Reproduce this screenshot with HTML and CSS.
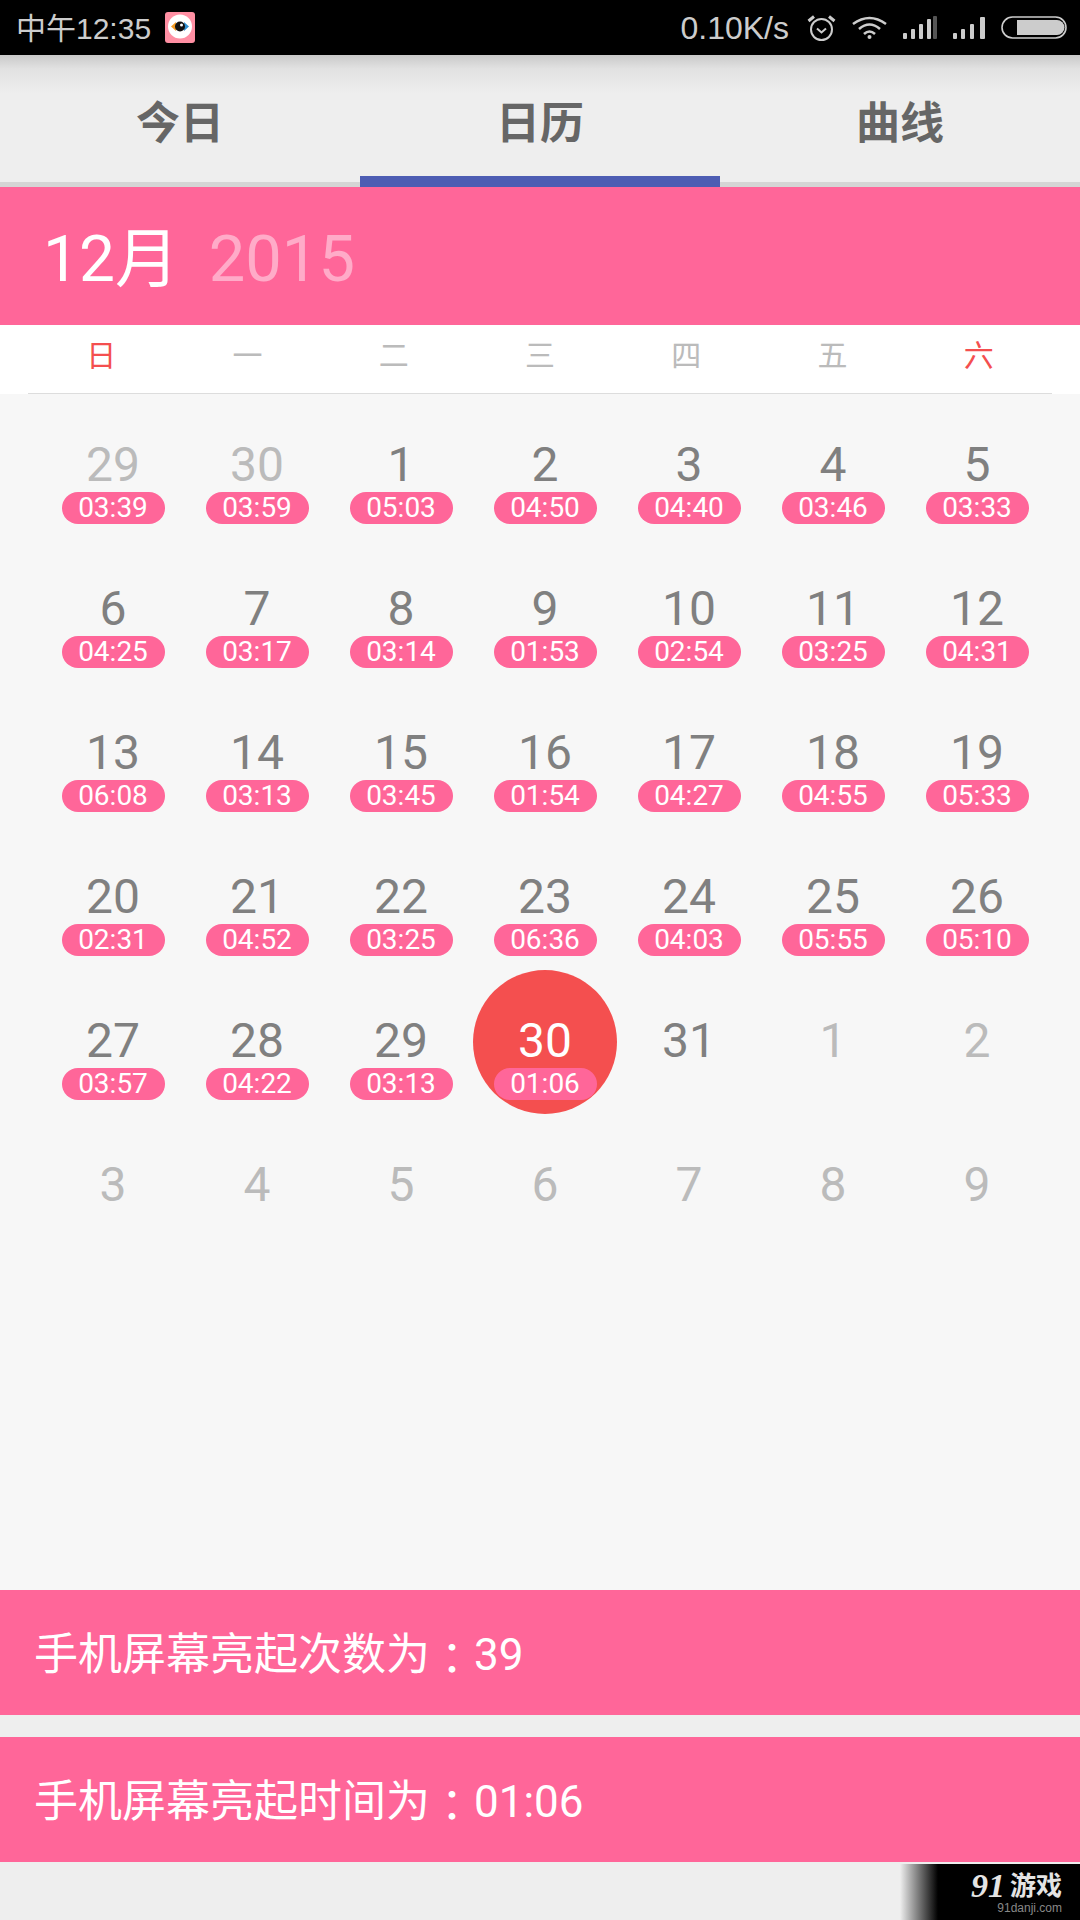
FILE: index.html
```html
<!DOCTYPE html>
<html lang="zh">
<head>
    <meta charset="UTF-8">
    <title>日历</title>
    <link rel="stylesheet" href="styles.css">
</head>
<body>
    <div class="app">
        <div class="status-bar">
            <div class="status-left">
                <span class="status-text clock">中午12:35</span>
                <svg class="app-icon" width="30" height="31" viewBox="0 0 30 31">
                    <rect width="30" height="31" rx="3" fill="#ff8fa3"/>
                    <circle cx="15" cy="14.5" r="12" fill="#fff"/>
                    <path d="M6 14.5 L11 10 V19 Z" fill="#f39a22"/>
                    <path d="M24 14.5 L19 10 V19 Z" fill="#2f8fd0"/>
                    <circle cx="15" cy="14.5" r="5" fill="#111"/>
                    <circle cx="16.5" cy="13" r="1.5" fill="#fff"/>
                </svg>
            </div>
            <div class="status-right">
                <span class="status-text speed">0.10K/s</span>
                <svg class="alarm" width="29" height="26" viewBox="0 0 29 26" fill="none" stroke="#ccc">
                    <circle cx="14.5" cy="14.5" r="10.5" stroke-width="2"/>
                    <path d="M10 13.5 L14.5 17.5 L19 13.5" stroke-width="2"/>
                    <path d="M1.5 6 L7 1.5 M27.5 6 L22 1.5" stroke-width="3"/>
                </svg>
                <svg class="wifi" width="35" height="23" viewBox="0 0 35 23" fill="none" stroke="#ccc" stroke-width="2.6">
                    <path d="M1 8 Q17.5 -4 34 8"/>
                    <path d="M7 13 Q17.5 4 28 13"/>
                    <path d="M12 18 Q17.5 13 23 18"/>
                    <circle cx="17.5" cy="21" r="2" fill="#ccc" stroke="none"/>
                </svg>
                <svg class="signal" width="34" height="23" viewBox="0 0 34 23" fill="#ccc">
                    <rect x="0" y="17" width="4" height="6" rx="1"/>
                    <rect x="8" y="13" width="4" height="10" rx="1"/>
                    <rect x="16" y="8" width="4" height="15" rx="1"/>
                    <rect x="24" y="3" width="4" height="20" rx="1"/>
                    <rect x="30" y="0" width="4" height="23" rx="1" fill="#555"/>
                </svg>
                <svg class="signal" width="34" height="23" viewBox="0 0 34 23" fill="#ccc">
                    <rect x="0" y="17" width="4" height="6" rx="1"/>
                    <rect x="8" y="13" width="4" height="10" rx="1"/>
                    <rect x="17" y="8" width="4" height="15" rx="1"/>
                    <rect x="27" y="1" width="5" height="22" rx="1"/>
                </svg>
                <svg class="battery" width="66" height="23" viewBox="0 0 66 23">
                    <rect x="1" y="1" width="64" height="21" rx="10.5" fill="none" stroke="#ccc" stroke-width="1.6"/>
                    <path d="M16 4 H56 A7.5 7.5 0 0 1 56 19 H16 Z" fill="#ccc"/>
                </svg>
            </div>
        </div>

        <div class="tabs">
            <div class="tab">今日</div>
            <div class="tab active">日历</div>
            <div class="tab">曲线</div>
        </div>

        <div class="month-header">
            <span class="month">12月</span>
            <span class="year">2015</span>
        </div>

        <div class="week-wrap">
            <div class="week">
                <span class="weekend">日</span>
                <span>一</span>
                <span>二</span>
                <span>三</span>
                <span>四</span>
                <span>五</span>
                <span class="weekend">六</span>
            </div>
        </div>

        <div class="calendar">
            <div class="day other"><div class="num">29</div><div class="time">03:39</div></div>
            <div class="day other"><div class="num">30</div><div class="time">03:59</div></div>
            <div class="day"><div class="num">1</div><div class="time">05:03</div></div>
            <div class="day"><div class="num">2</div><div class="time">04:50</div></div>
            <div class="day"><div class="num">3</div><div class="time">04:40</div></div>
            <div class="day"><div class="num">4</div><div class="time">03:46</div></div>
            <div class="day"><div class="num">5</div><div class="time">03:33</div></div>

            <div class="day"><div class="num">6</div><div class="time">04:25</div></div>
            <div class="day"><div class="num">7</div><div class="time">03:17</div></div>
            <div class="day"><div class="num">8</div><div class="time">03:14</div></div>
            <div class="day"><div class="num">9</div><div class="time">01:53</div></div>
            <div class="day"><div class="num">10</div><div class="time">02:54</div></div>
            <div class="day"><div class="num">11</div><div class="time">03:25</div></div>
            <div class="day"><div class="num">12</div><div class="time">04:31</div></div>

            <div class="day"><div class="num">13</div><div class="time">06:08</div></div>
            <div class="day"><div class="num">14</div><div class="time">03:13</div></div>
            <div class="day"><div class="num">15</div><div class="time">03:45</div></div>
            <div class="day"><div class="num">16</div><div class="time">01:54</div></div>
            <div class="day"><div class="num">17</div><div class="time">04:27</div></div>
            <div class="day"><div class="num">18</div><div class="time">04:55</div></div>
            <div class="day"><div class="num">19</div><div class="time">05:33</div></div>

            <div class="day"><div class="num">20</div><div class="time">02:31</div></div>
            <div class="day"><div class="num">21</div><div class="time">04:52</div></div>
            <div class="day"><div class="num">22</div><div class="time">03:25</div></div>
            <div class="day"><div class="num">23</div><div class="time">06:36</div></div>
            <div class="day"><div class="num">24</div><div class="time">04:03</div></div>
            <div class="day"><div class="num">25</div><div class="time">05:55</div></div>
            <div class="day"><div class="num">26</div><div class="time">05:10</div></div>

            <div class="day"><div class="num">27</div><div class="time">03:57</div></div>
            <div class="day"><div class="num">28</div><div class="time">04:22</div></div>
            <div class="day"><div class="num">29</div><div class="time">03:13</div></div>
            <div class="day today"><div class="num">30</div><div class="time">01:06</div></div>
            <div class="day"><div class="num">31</div></div>
            <div class="day other"><div class="num">1</div></div>
            <div class="day other"><div class="num">2</div></div>

            <div class="day other"><div class="num">3</div></div>
            <div class="day other"><div class="num">4</div></div>
            <div class="day other"><div class="num">5</div></div>
            <div class="day other"><div class="num">6</div></div>
            <div class="day other"><div class="num">7</div></div>
            <div class="day other"><div class="num">8</div></div>
            <div class="day other"><div class="num">9</div></div>
        </div>

        <div class="stats">
            <div class="stat">手机屏幕亮起次数为<span class="colon" lang="zh-TW">：</span>39</div>
            <div class="stat">手机屏幕亮起时间为<span class="colon" lang="zh-TW">：</span>01:06</div>
        </div>

        <div class="watermark">
            <div class="wm-logo"><span class="wm-num">91</span><span class="wm-name">游戏</span></div>
            <div class="wm-url">91danji.com</div>
        </div>
    </div>
</body>
</html>
```

FILE: styles.css
```css
html, body {
    margin: 0;
    padding: 0;
}

body {
    width: 1080px;
    height: 1920px;
    overflow: hidden;
    font-family: Roboto, "Noto Sans CJK SC", sans-serif;
}

.app {
    position: relative;
    display: flex;
    flex-direction: column;
    height: 1920px;
    padding-bottom: 58px;
    box-sizing: border-box;
    background-color: #eeeeee;
}

/* Status bar */
.status-bar {
    display: flex;
    justify-content: space-between;
    align-items: center;
    height: 55px;
    padding: 0 13px 0 16px;
    box-sizing: border-box;
    background-color: #000;
}

.status-left, .status-right {
    display: flex;
    align-items: center;
}

.status-text {
    font-family: "Liberation Sans", "Noto Sans CJK SC", sans-serif;
    font-size: 30px;
    color: #ccc;
}

.clock {
    margin-bottom: 3px;
}

.app-icon {
    margin-left: 14px;
}

.speed {
    margin-top: 2px;
    margin-right: 18px;
    font-size: 32px;
}

.alarm, .wifi, .signal {
    margin-right: 16px;
}

.signal + .battery {
    margin-left: -2px;
}

/* Tabs */
.tabs {
    display: flex;
    height: 132px;
    box-sizing: border-box;
    border-bottom: 5px solid #d5d5d5;
    background: linear-gradient(#c9c9c9 0, #e2e2e2 14px, #eeeeee 38px);
}

.tab {
    flex: 1;
    display: flex;
    justify-content: center;
    align-items: center;
    padding-top: 2px;
    box-sizing: border-box;
    font-size: 44px;
    font-weight: bold;
    color: #666;
}

.tab.active {
    height: 132px;
    padding-top: 8px;
    border-bottom: 11px solid #4d5db3;
}

/* Month header */
.month-header {
    height: 138px;
    padding-left: 43px;
    background-color: #ff6699;
    font-size: 64px;
    line-height: 144px;
}

.month {
    color: #fff;
}

.year {
    margin-left: 14px;
    font-size: 65px;
    color: #ffabc8;
}

/* Weekday row */
.week-wrap {
    padding: 0 28px;
    background-color: #fff;
}

.week {
    display: grid;
    grid-template-columns: repeat(7, 1fr);
    height: 69px;
    box-sizing: border-box;
    border-bottom: 1px solid #dddddd;
    font-size: 30px;
    line-height: 62px;
    text-align: center;
    color: #bbb;
}

.weekend {
    color: #f44f4f;
}

/* Calendar */
.calendar {
    flex: 1;
    display: grid;
    grid-template-columns: repeat(7, 144px);
    grid-auto-rows: 144px;
    padding-left: 41px;
    background-color: #f7f7f7;
}

.day {
    display: flex;
    flex-direction: column;
    align-items: center;
    padding-top: 43px;
    box-sizing: border-box;
    color: #808080;
}

.num {
    height: 55px;
    font-size: 48px;
    line-height: 56px;
}

.time {
    width: 103px;
    height: 32px;
    border-radius: 16px;
    background-color: #ff6699;
    color: #fff;
    font-size: 28px;
    line-height: 31px;
    text-align: center;
}

.other {
    color: #bbb;
}

.today {
    border-radius: 50%;
    background-color: #f44f4f;
    color: #fff;
}

/* Bottom stats */
.stats {
    display: flex;
    flex-direction: column;
    gap: 22px;
}

.stat {
    height: 125px;
    padding-left: 34px;
    background-color: #ff6699;
    color: #fff;
    font-size: 44px;
    line-height: 131px;
}

.colon {
    font-family: "Noto Sans CJK TC", sans-serif;
    line-height: 1;
    vertical-align: -5px;
}

/* Site watermark in the corner */
.watermark {
    position: absolute;
    right: 0;
    bottom: 0;
    width: 180px;
    height: 56px;
    padding-right: 18px;
    box-sizing: border-box;
    background: linear-gradient(to right, #eeeeee 0, #000 38px);
    text-align: right;
}

.wm-logo {
    display: flex;
    justify-content: flex-end;
    align-items: center;
    height: 36px;
    padding-top: 8px;
    box-sizing: border-box;
    color: #e4e4e4;
}

.wm-num {
    margin-right: 5px;
    font-family: "Liberation Serif", serif;
    font-size: 34px;
    font-style: italic;
    font-weight: bold;
}

.wm-name {
    font-size: 26px;
    font-weight: bold;
    line-height: 28px;
}

.wm-url {
    font-family: "Liberation Sans", sans-serif;
    font-size: 12px;
    line-height: 16px;
    color: #888;
}
```
